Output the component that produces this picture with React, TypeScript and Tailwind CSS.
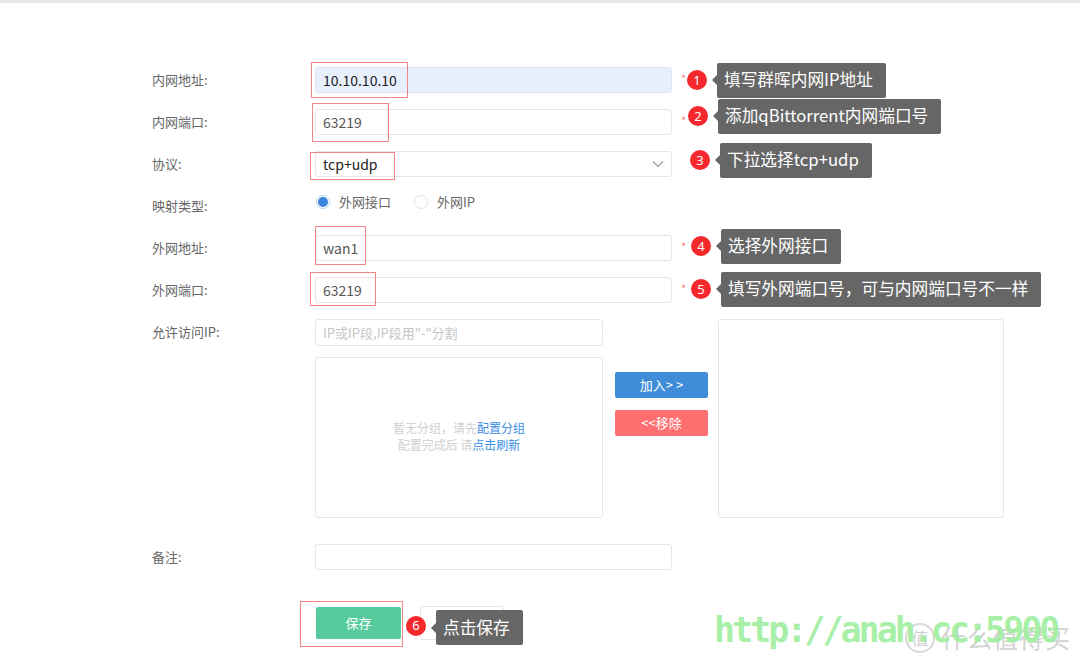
import React from "react";

interface NoteProps {
  n: number;
  text: string;
  star?: boolean;
  pad: string;
  shift: string;
}

// red circle + dark callout used for the numbered annotations
function Note({ n, text, star, pad, shift }: NoteProps) {
  return (
    <div className={`relative flex items-center h-full ${pad}`}>
      {star && (
        <span className="absolute left-[9px] top-[6px] text-[11px] leading-none text-[#f47c7c]">*</span>
      )}
      <div className={`flex items-center ${shift}`}>
        <Badge n={n} />
        <Callout text={text} />
      </div>
    </div>
  );
}

function Badge({ n }: { n: number }) {
  return (
    <span className="flex items-center justify-center w-5 h-5 rounded-full bg-[#f5282d] text-white text-[13px] leading-none font-['Noto_Sans',sans-serif]">
      {n}
    </span>
  );
}

function Callout({ text }: { text: string }) {
  return (
    <div className="relative ml-[10px] h-[35px] flex items-center pl-[7px] pr-[13px] bg-[#666666] rounded-[2px] text-white text-[16.7px] whitespace-nowrap">
      <span className="absolute left-[-5px] top-1/2 -translate-y-1/2 w-0 h-0 border-y-[5px] border-y-transparent border-r-[5px] border-r-[#666666]" />
      {text}
    </div>
  );
}

function Label({ children }: { children: React.ReactNode }) {
  return <div className="w-[163px] shrink-0 text-[13px] text-[#666]">{children}</div>;
}

function RedBox({ className }: { className: string }) {
  return <div className={`absolute border border-[#f28686] pointer-events-none ${className}`} />;
}

function Field({ value, dark, blue }: { value?: string; dark?: boolean; blue?: boolean }) {
  return (
    <div
      className={`h-full w-full flex items-center pl-[7px] rounded-[3px] border text-[14px] ${
        blue ? "bg-[#e8f0fe] border-[#dfe7f3]" : "bg-white border-[#e6e6e6]"
      } ${dark ? "text-[#222]" : "text-[#555]"}`}
    >
      {value}
    </div>
  );
}

export default function App() {
  return (
    <div className="relative w-[1080px] h-[664px] overflow-hidden bg-white font-['Noto_Sans_CJK_SC','Noto_Sans',sans-serif]">
      <div className="h-[3px] bg-[#e8e8e8]" />

      <div className="pt-[64px] pl-[152px]">
        {/* 内网地址 */}
        <div className="flex items-center h-[26px] mb-4">
          <Label>内网地址:</Label>
          <div className="relative w-[357px] h-full">
            <Field value="10.10.10.10" dark blue />
            <RedBox className="left-[-4px] top-[-5px] w-[97px] h-[36px]" />
          </div>
          <Note n={1} text="填写群晖内网IP地址" star pad="pl-[15px]" shift="translate-y-0" />
        </div>

        {/* 内网端口 */}
        <div className="flex items-center h-[26px] mb-4">
          <Label>内网端口:</Label>
          <div className="relative w-[357px] h-full">
            <Field value="63219" />
            <RedBox className="left-[-3px] top-[-6px] w-[77px] h-[39px]" />
          </div>
          <Note n={2} text="添加qBittorrent内网端口号" star pad="pl-[16px]" shift="-translate-y-[6px]" />
        </div>

        {/* 协议 */}
        <div className="flex items-center h-[26px] mb-4">
          <Label>协议:</Label>
          <div className="relative w-[357px] h-full">
            <div className="h-full w-full flex items-center justify-between pl-[7px] pr-[7px] rounded-[3px] border border-[#e6e6e6] text-[14px] text-[#222]">
              tcp+udp
              <svg width="12" height="8" viewBox="0 0 12 8" fill="none">
                <path d="M1 1.5 6 6.5 11 1.5" stroke="#9a9a9a" strokeWidth="1.2" />
              </svg>
            </div>
            <RedBox className="left-[-5px] top-[1px] w-[85px] h-[28px]" />
          </div>
          <Note n={3} text="下拉选择tcp+udp" pad="pl-[18px]" shift="-translate-y-[4px]" />
        </div>

        {/* 映射类型 */}
        <div className="flex items-center h-[26px] mb-4">
          <Label>映射类型:</Label>
          <div className="flex items-center -translate-y-[4px] text-[13px] text-[#666]">
            <span className="flex items-center justify-center w-[14px] h-[14px] rounded-full border border-[#b9d4f1] ml-[1px]">
              <span className="w-[10px] h-[10px] rounded-full bg-[#3a86dc]" />
            </span>
            <span className="ml-[9px]">外网接口</span>
            <span className="w-[14px] h-[14px] rounded-full border border-[#e3e3e3] ml-[23px]" />
            <span className="ml-[9px]">外网IP</span>
          </div>
        </div>

        {/* 外网地址 */}
        <div className="flex items-center h-[26px] mb-4">
          <Label>外网地址:</Label>
          <div className="relative w-[357px] h-full">
            <Field value="wan1" />
            <RedBox className="left-[0px] top-[-9px] w-[51px] h-[39px]" />
          </div>
          <Note n={4} text="选择外网接口" star pad="pl-[19px]" shift="-translate-y-[2px]" />
        </div>

        {/* 外网端口 */}
        <div className="flex items-center h-[26px] mb-4">
          <Label>外网端口:</Label>
          <div className="relative w-[357px] h-full">
            <Field value="63219" />
            <RedBox className="left-[-5px] top-[-5px] w-[66px] h-[34px]" />
          </div>
          <Note n={5} text="填写外网端口号，可与内网端口号不一样" star pad="pl-[19px]" shift="-translate-y-[1px]" />
        </div>

        {/* 允许访问IP */}
        <div className="flex items-start">
          <div className="h-[26px] flex items-center">
            <Label>允许访问IP:</Label>
          </div>
          <div className="w-[288px]">
            <div className="h-[27px] flex items-center pl-[7px] rounded-[3px] border border-[#e6e6e6] text-[13px] text-[#c6c6c6]">
              IP或IP段,IP段用"-"分割
            </div>
            <div className="mt-[11px] h-[161px] rounded-[3px] border border-[#e6e6e6] flex flex-col items-center justify-center text-[12px] leading-[17px] text-[#cfcfcf] pb-[4px]">
              <div>
                暂无分组，请先<span className="text-[#3a8ee6]">配置分组</span>
              </div>
              <div>
                配置完成后 请<span className="text-[#3a8ee6]">点击刷新</span>
              </div>
            </div>
          </div>
          <div className="ml-[12px] w-[93px] mt-[53px] flex flex-col gap-[12px] text-[13px] text-white">
            <div className="h-[26px] flex items-center justify-center rounded-[2px] bg-[#3f8dd8]">加入&gt; &gt;</div>
            <div className="h-[26px] flex items-center justify-center rounded-[2px] bg-[#ff6f72]">&lt;&lt;移除</div>
          </div>
          <div className="ml-[10px] w-[286px] h-[199px] rounded-[3px] border border-[#e6e6e6]" />
        </div>

        {/* 备注 */}
        <div className="flex items-center h-[26px] mt-[26px]">
          <Label>备注:</Label>
          <div className="w-[357px] h-full">
            <Field />
          </div>
        </div>
      </div>

      {/* 保存 */}
      <div className="relative flex items-start mt-[37px] pl-[316px]">
        <div className="relative">
          <div className="w-[85px] h-[32px] flex items-center justify-center rounded-[2px] bg-[#57cb9e] text-white text-[13px]">
            保存
          </div>
          <RedBox className="left-[-16px] top-[-6px] w-[103px] h-[46px]" />
        </div>
        <div className="ml-[19px] -mt-[1px] w-[84px] h-[34px] flex items-center justify-center rounded-[2px] border border-[#e6e6e6] text-[13px] text-[#999]">
          取消
        </div>
        <div className="absolute left-[406px] top-[3px] flex items-center">
          <span className="-translate-y-[2px]">
            <Badge n={6} />
          </span>
          <Callout text="点击保存" />
        </div>
      </div>

      {/* watermarks */}
      <div className="absolute left-[905px] top-[619px] flex items-center text-[#c9c9c9] opacity-80">
        <span className="w-[30px] h-[30px] rounded-full border-2 border-[#cfcfcf] flex items-center justify-center text-[17px]">值</span>
        <span className="ml-[6px] text-[25px] tracking-[1px]">什么值得买</span>
      </div>
      <div className="absolute left-[714px] top-[613px] leading-none text-[35px] font-bold tracking-[-3px] text-[#9fee9f] opacity-90 font-['DejaVu_Sans_Mono',monospace]">
        http://anah.cc:5900
      </div>
    </div>
  );
}
